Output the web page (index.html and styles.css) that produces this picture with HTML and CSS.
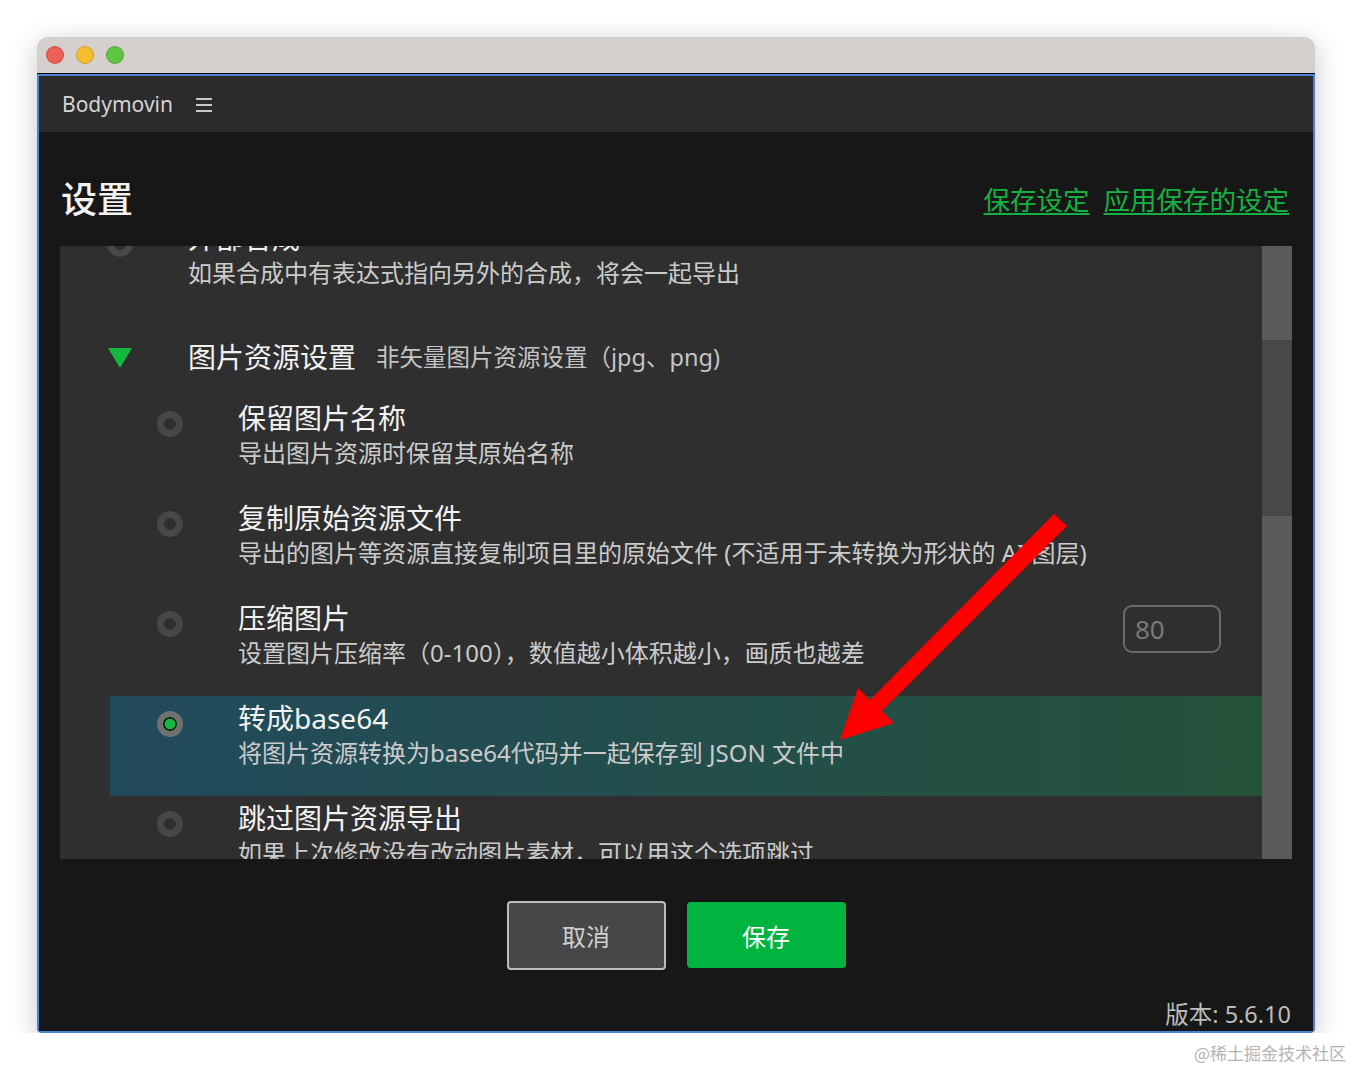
FILE: index.html
```html
<!DOCTYPE html>
<html>
<head>
<meta charset="utf-8">
<title>Bodymovin</title>
<link rel="stylesheet" href="styles.css">
</head>
<body>

<div class="window">
  <div class="titlebar">
    <span class="light red"></span>
    <span class="light yellow"></span>
    <span class="light green"></span>
  </div>

  <div class="frame">
    <div class="header">
      <span class="brand">Bodymovin</span>
      <span class="burger"><i></i><i></i><i></i></span>
    </div>

    <div class="main">
      <div class="title-row">
        <h1 class="title">设置</h1>
        <div class="links">
          <a href="#">保存设定</a>
          <a href="#">应用保存的设定</a>
        </div>
      </div>

      <div class="list">
        <div class="items">
          <div class="row first">
            <span class="radio"></span>
            <div class="text">
              <div class="name">外部合成</div>
              <div class="desc">如果合成中有表达式指向另外的合成，将会一起导出</div>
            </div>
          </div>

          <div class="section">
            <span class="tri"></span>
            <span class="sec-name">图片资源设置</span>
            <span class="sec-desc">非矢量图片资源设置（jpg、png)</span>
          </div>

          <div class="row sub">
            <span class="radio"></span>
            <div class="text">
              <div class="name">保留图片名称</div>
              <div class="desc">导出图片资源时保留其原始名称</div>
            </div>
          </div>

          <div class="row sub">
            <span class="radio"></span>
            <div class="text">
              <div class="name">复制原始资源文件</div>
              <div class="desc">导出的图片等资源直接复制项目里的原始文件 (不适用于未转换为形状的 AI 图层)</div>
            </div>
          </div>

          <div class="row sub">
            <span class="radio"></span>
            <div class="text">
              <div class="name">压缩图片</div>
              <div class="desc">设置图片压缩率（0-100），数值越小体积越小，画质也越差</div>
            </div>
            <input class="num" type="text" value="80">
          </div>

          <div class="row sub active">
            <span class="radio on"></span>
            <div class="text">
              <div class="name">转成base64</div>
              <div class="desc">将图片资源转换为base64代码并一起保存到 JSON 文件中</div>
            </div>
          </div>

          <div class="row sub">
            <span class="radio"></span>
            <div class="text">
              <div class="name">跳过图片资源导出</div>
              <div class="desc">如果上次修改没有改动图片素材，可以用这个选项跳过</div>
            </div>
          </div>
        </div>
        <div class="scrollbar"><div class="thumb"></div></div>
      </div>

      <div class="buttons">
        <button class="btn cancel">取消</button>
        <button class="btn save">保存</button>
      </div>

      <div class="version">版本: 5.6.10</div>
    </div>
  </div>
</div>

<!-- annotation arrow drawn over the screenshot -->
<svg class="arrow" width="1352" height="1070" viewBox="0 0 1352 1070">
  <polygon fill="#ff0000" points="1054,514 1067,526 882,711 894,723 840,740 858,688 870,700"/>
</svg>

<div class="watermark">@稀土掘金技术社区</div>

</body>
</html>
```

FILE: styles.css
```css
body {
  margin: 0;
  padding: 37px 37px 0;
  background: #ffffff;
  font-family: "Noto Sans", "Noto Sans CJK SC", sans-serif;
}

.window {
  border-radius: 11px 11px 5px 5px;
  overflow: hidden;
  box-shadow: 0 6px 28px rgba(0, 0, 0, 0.22);
}

.titlebar {
  height: 36px;
  background: #d5cfcd;
  border-bottom: 1px solid #000;
  display: flex;
  align-items: center;
  gap: 12px;
  padding-left: 9px;
}

.light {
  width: 16px;
  height: 16px;
  border-radius: 50%;
  border: 1px solid rgba(0, 0, 0, 0.15);
}
.red { background: #ee5f57; }
.yellow { background: #f6bd30; }
.green { background: #5ec63f; }

.frame {
  border: 2px solid #4b80d6;
  background: #171717;
}

.header {
  height: 56px;
  background: #2b2b2b;
  display: flex;
  align-items: center;
  padding-left: 23px;
}

.brand {
  color: #d4d4d4;
  font-size: 21px;
}

.burger {
  display: flex;
  flex-direction: column;
  gap: 4px;
  margin-left: 23px;
  margin-top: 2px;
}
.burger i {
  display: block;
  width: 16px;
  height: 2px;
  background: #c8c8c8;
}

.main {
  padding: 0 21px 2px;
}

.title-row {
  display: flex;
  align-items: center;
  justify-content: space-between;
  padding: 44px 3px 22px 1px;
}

.title {
  margin: 0;
  font-size: 36px;
  line-height: 48px;
  font-weight: 500;
  color: #f2f2f2;
}

.links {
  display: flex;
  gap: 14px;
  margin-top: 0;
}
.links a {
  color: #17b142;
  font-size: 26.5px;
  line-height: 34px;
  text-decoration: underline;
  text-underline-offset: 3px;
}

.list {
  height: 613px;
  background: #2f2f2f;
  display: flex;
  overflow: hidden;
}

.items {
  flex: 1;
}

.row {
  height: 100px;
  box-sizing: border-box;
  display: flex;
  align-items: flex-start;
  padding: 4px 0 0 47px;
}
.row.first {
  margin-top: -30px;
}
.row.sub {
  margin-left: 50px;
}
.row.active {
  background: linear-gradient(to right, #224a5d, #24523a);
}

.radio {
  width: 26px;
  height: 26px;
  box-sizing: border-box;
  border-radius: 50%;
  border: 7px solid #474747;
  background: #2f2f2f;
  margin-top: 11px;
  flex: none;
}
.radio.on {
  border: 6px solid #707070;
  background: #14b840;
  box-shadow: inset 0 0 0 1.5px #000;
}

.text {
  margin-left: 55px;
  flex: 1;
}

.name {
  font-size: 28px;
  line-height: 36px;
  color: #f2f2f2;
}

.desc {
  font-size: 24px;
  line-height: 34px;
  color: #cbcbcb;
}

.num {
  width: 98px;
  height: 48px;
  box-sizing: border-box;
  margin: 5px 41px 0 0;
  border: 2px solid #6a6a6a;
  border-radius: 9px;
  background: transparent;
  color: #7a7a7a;
  font-family: "Noto Sans", sans-serif;
  font-size: 26px;
  padding: 0 0 0 10px;
}

.section {
  height: 80px;
  box-sizing: border-box;
  display: flex;
  align-items: flex-start;
  padding: 23px 0 0 48px;
}

.tri {
  width: 0;
  height: 0;
  border-left: 12px solid transparent;
  border-right: 12px solid transparent;
  border-top: 20px solid #15b83f;
  margin-top: 9px;
}

.sec-name {
  margin-left: 56px;
  font-size: 28px;
  line-height: 36px;
  color: #f2f2f2;
}

.sec-desc {
  margin-left: 20px;
  font-size: 23.5px;
  line-height: 36px;
  color: #c4c4c4;
}

.scrollbar {
  width: 30px;
  background: #5b5b5b;
  padding-top: 94px;
}
.thumb {
  height: 176px;
  box-sizing: border-box;
  background: #4a4a4a;
  border: 1px solid #444;
}

.buttons {
  display: flex;
  justify-content: center;
  align-items: flex-start;
  gap: 21px;
  margin-top: 42px;
}

.btn {
  width: 159px;
  font-family: "Noto Sans CJK SC", sans-serif;
  font-size: 24px;
  border-radius: 4px;
}
.cancel {
  height: 69px;
  background: #474747;
  border: 2px solid #bcbcbc;
  color: #cfcfcf;
}
.save {
  height: 66px;
  margin-top: 1px;
  background: #00b440;
  border: none;
  color: #ffffff;
}

.version {
  margin-top: 29px;
  text-align: right;
  padding-right: 1px;
  font-size: 23.5px;
  line-height: 30px;
  color: #bdbdbd;
}

.arrow {
  position: absolute;
  left: 0;
  top: 0;
  pointer-events: none;
}

.watermark {
  position: absolute;
  right: 6px;
  top: 1040px;
  font-family: "Noto Sans CJK SC", sans-serif;
  font-size: 17px;
  color: #b4b4b4;
}
```
